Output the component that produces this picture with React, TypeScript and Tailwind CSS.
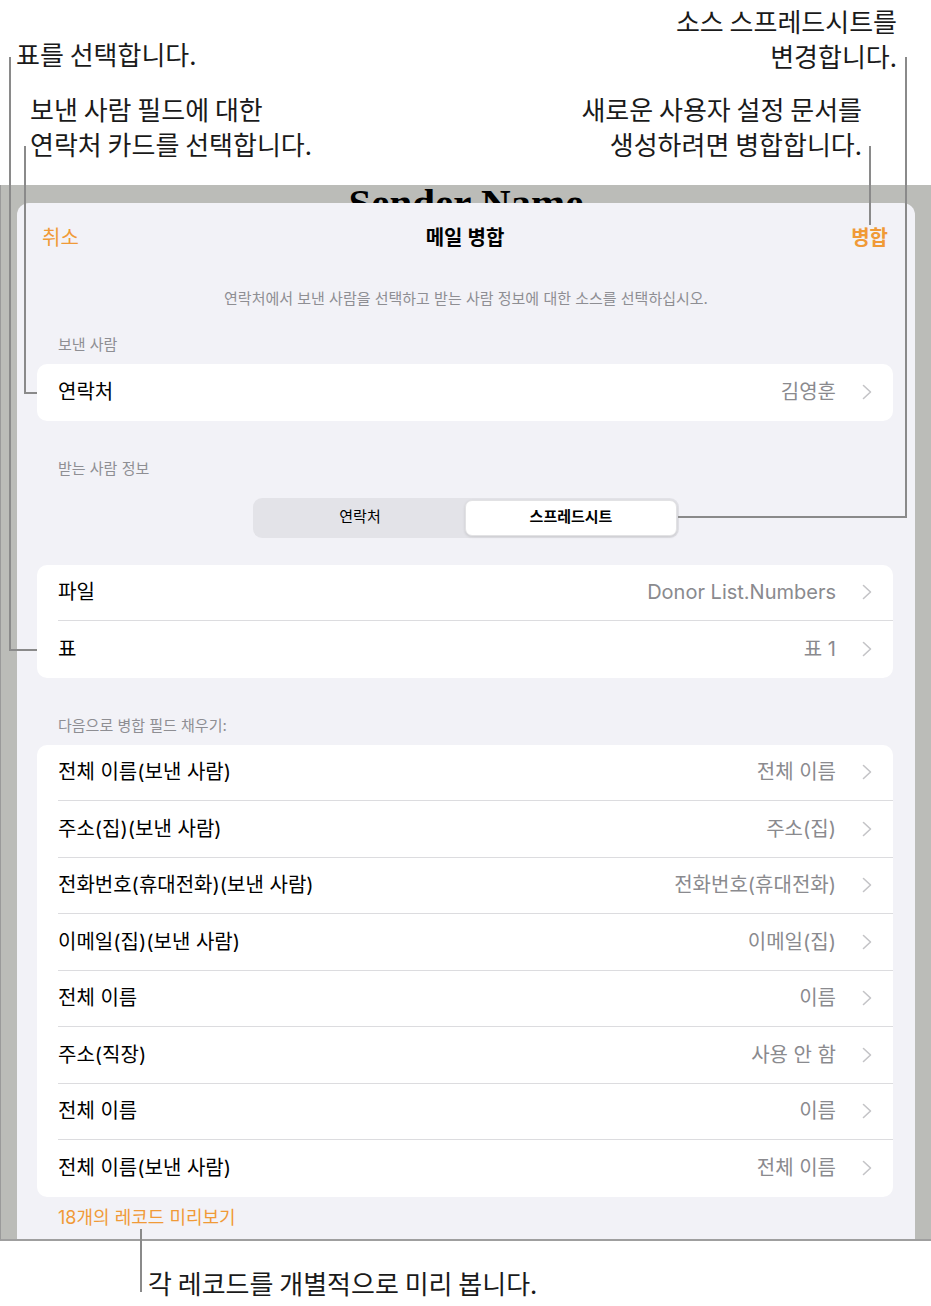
const ui = "font-['Inter','Noto_Sans_CJK_KR',sans-serif]"
const note = "font-['Noto_Sans_CJK_KR',sans-serif] text-[26px] leading-[35px] text-[#1a1a1a]"

const Chevron = () => (
  <svg width="10" height="16" viewBox="0 0 10 16" className="ml-[26px] shrink-0">
    <polyline
      points="1.5,1.5 8.5,8 1.5,14.5"
      fill="none"
      stroke="#c4c4c7"
      strokeWidth="1.6"
      strokeLinecap="round"
      strokeLinejoin="round"
    />
  </svg>
)

const Row = ({ label, value, last }: { label: string; value: string; last?: boolean }) => (
  <div className="h-[56.5px] pl-[21px] flex">
    <div
      className={`flex-1 flex items-center pr-[21px] ${last ? '' : 'border-b border-[#dcdcdf]'}`}
    >
      <span className="text-[20px] text-black">{label}</span>
      <span className="ml-auto text-[20px] text-[#8a8a8e]">{value}</span>
      <Chevron />
    </div>
  </div>
)

const Section = ({ children }: { children: string }) => (
  <div className="h-[20px] pl-[41px] text-[15px] leading-[20px] text-[#8e8e93]">{children}</div>
)

const fields = [
  ['전체 이름(보낸 사람)', '전체 이름'],
  ['주소(집)(보낸 사람)', '주소(집)'],
  ['전화번호(휴대전화)(보낸 사람)', '전화번호(휴대전화)'],
  ['이메일(집)(보낸 사람)', '이메일(집)'],
  ['전체 이름', '이름'],
  ['주소(직장)', '사용 안 함'],
  ['전체 이름', '이름'],
  ['전체 이름(보낸 사람)', '전체 이름'],
]

export default function App() {
  return (
    <div className={`relative w-[931px] h-[1306px] bg-white overflow-hidden ${ui}`}>
      {/* top callouts */}
      <div className="h-[185px] flex justify-between">
        <div className="flex flex-col">
          <div className={`${note} pl-[16px] pt-[35.5px]`}>표를 선택합니다.</div>
          <div className={`${note} pl-[30px] mt-[20px]`}>
            <div>보낸 사람 필드에 대한</div>
            <div>연락처 카드를 선택합니다.</div>
          </div>
        </div>
        <div className="flex flex-col items-end">
          <div className={`${note} pr-[34px] pt-[2.5px] text-right`}>
            <div>소스 스프레드시트를</div>
            <div>변경합니다.</div>
          </div>
          <div className={`${note} pr-[69px] mt-[18px] text-right`}>
            <div>새로운 사용자 설정 문서를</div>
            <div>생성하려면 병합합니다.</div>
          </div>
        </div>
      </div>

      {/* device frame */}
      <div className="bg-[#bbbcb8] border-l border-[#9a9a9a] border-b-2 border-b-[#9f9f9f]">
        <div className="h-[18px] overflow-hidden flex justify-center">
          <div className="-mt-[2px] font-['Liberation_Serif',serif] font-bold text-[41px] leading-none text-black">
            Sender Name
          </div>
        </div>
        <div className="ml-[16px] mr-[16px] h-[1036px] overflow-hidden rounded-t-[12px] bg-[#f2f2f7] flex flex-col">
          <div className="h-[70px] pl-[25px] pr-[27px] grid grid-cols-[1fr_auto_1fr] items-center text-[20px]">
            <span className="text-[#f09a37]">취소</span>
            <span className="font-semibold text-black">메일 병합</span>
            <span className="justify-self-end font-semibold text-[#f09a37]">병합</span>
          </div>
          <div className="mt-[16px] h-[20px] text-center text-[15px] leading-[20px] text-[#8e8e93]">
            연락처에서 보낸 사람을 선택하고 받는 사람 정보에 대한 소스를 선택하십시오.
          </div>

          <div className="mt-[26px]">
            <Section>보낸 사람</Section>
          </div>
          <div className="mt-[9px] ml-[20px] mr-[22px] bg-white rounded-[10px] overflow-hidden">
            <Row label="연락처" value="김영훈" last />
          </div>

          <div className="mt-[38px]">
            <Section>받는 사람 정보</Section>
          </div>
          <div className="mt-[19px] self-center w-[426px] h-[40px] rounded-[9px] bg-[#e3e3e8] p-[2px] flex text-[15px] text-black">
            <div className="flex-1 flex items-center justify-center">연락처</div>
            <div className="flex-1 flex items-center justify-center rounded-[7px] bg-white font-semibold shadow-[0_1px_3px_rgba(0,0,0,0.12)] border border-[#e2e2e4]">
              스프레드시트
            </div>
          </div>

          <div className="mt-[27px] ml-[20px] mr-[22px] bg-white rounded-[10px] overflow-hidden">
            <Row label="파일" value="Donor List.Numbers" />
            <Row label="표" value="표 1" last />
          </div>

          <div className="mt-[38px]">
            <Section>다음으로 병합 필드 채우기:</Section>
          </div>
          <div className="mt-[9px] ml-[20px] mr-[22px] bg-white rounded-[10px] overflow-hidden">
            {fields.map(([l, v], i) => (
              <Row key={i} label={l} value={v} last={i === fields.length - 1} />
            ))}
          </div>

          <div className="mt-[10px] pl-[41px] text-[18px] leading-[22px] text-[#f09a37]">
            18개의 레코드 미리보기
          </div>
        </div>
      </div>

      {/* bottom callout */}
      <div className={`${note} pl-[148px] pt-[24px]`}>각 레코드를 개별적으로 미리 봅니다.</div>

      {/* callout lines */}
      <svg className="absolute inset-0 pointer-events-none" width="931" height="1306">
        <g fill="none" stroke="#8a8a8a" strokeWidth="2">
          <path d="M10 57 V650 H37" />
          <path d="M25 146 V393 H37" />
          <path d="M906 57 V517 H678" />
          <path d="M870 146 V225" />
          <path d="M141 1229 V1292" />
        </g>
      </svg>
    </div>
  )
}
